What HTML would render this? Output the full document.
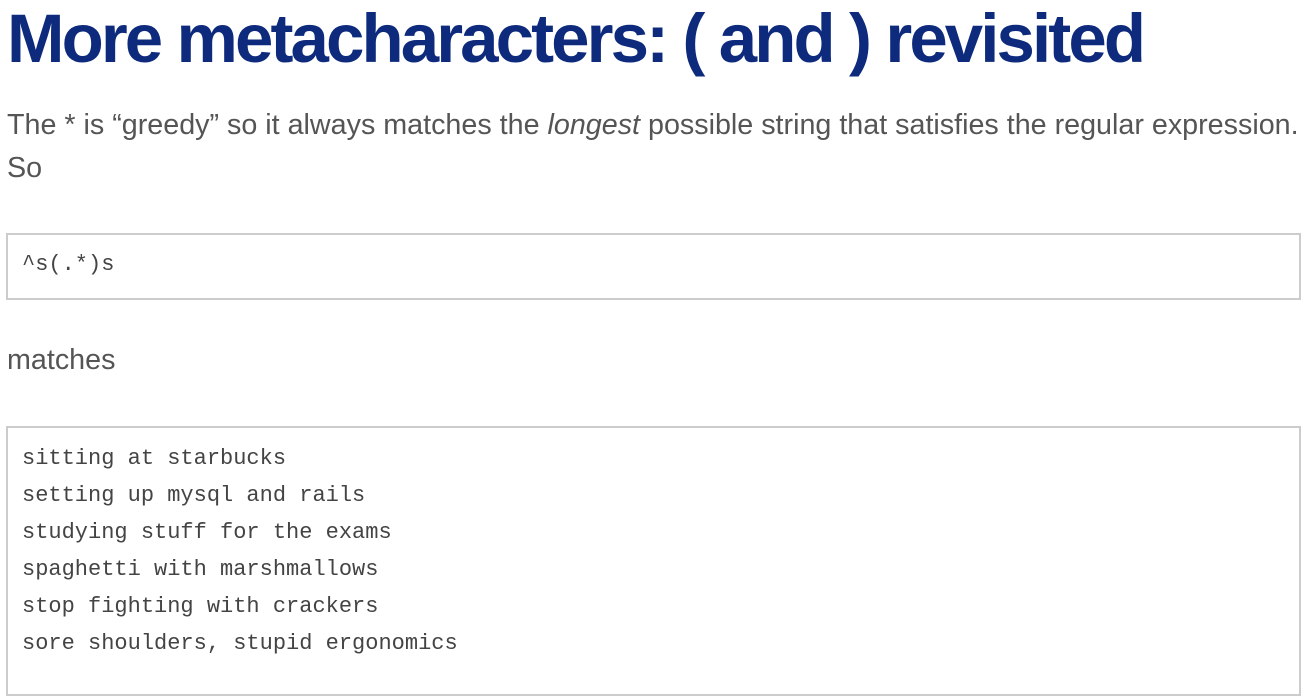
<!DOCTYPE html>
<html><head><meta charset="utf-8"><style>
body{margin:0;background:#fff;width:1309px;height:671px;overflow:hidden;font-family:"Liberation Sans",Arial,sans-serif;}
h1{position:absolute;left:7px;top:-1px;margin:0;font-size:69px;font-weight:bold;color:#0d2a7c;letter-spacing:-2.9px;white-space:nowrap;}
p{position:absolute;left:7px;margin:0;font-size:28.7px;line-height:43px;color:#555;}
.box{position:absolute;left:6px;width:1295px;border:2px solid #ccc;background:#fff;font-family:"Liberation Mono",monospace;font-size:22px;color:#444;box-sizing:border-box;}
.box div{position:absolute;left:14px;white-space:pre;}
</style></head><body>
<h1>More metacharacters: ( and ) revisited</h1>
<p style="top:104px">The * is “greedy” so it always matches the <i>longest</i> possible string that satisfies the regular expression.<br>So</p>
<div class="box" style="top:233px;height:67px"><div style="top:17px">^s(.*)s</div></div>
<p style="top:339px">matches</p>
<div class="box" style="top:426px;height:270px">
<div style="top:12px;line-height:37px">sitting at starbucks
setting up mysql and rails
studying stuff for the exams
spaghetti with marshmallows
stop fighting with crackers
sore shoulders, stupid ergonomics</div></div>
</body></html>
